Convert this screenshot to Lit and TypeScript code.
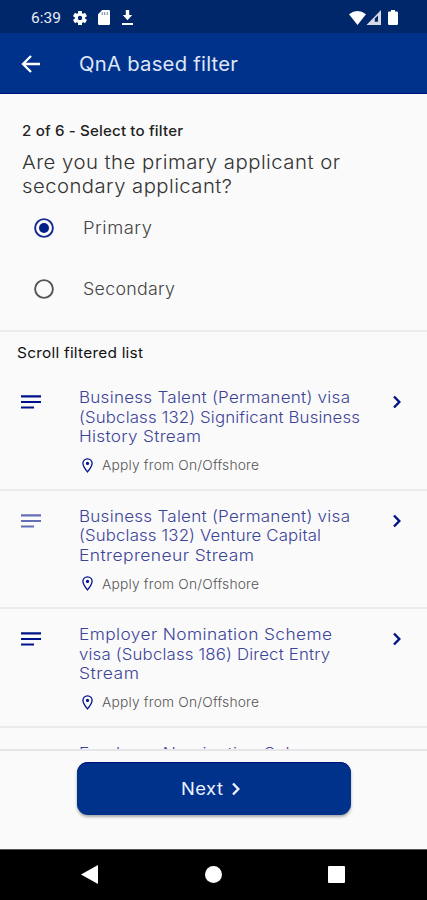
import { LitElement, html, css, svg } from "lit";
import { customElement, property } from "lit/decorators.js";

/** One line of text, widened (half by tracking, half by glyph width) to the given width. */
@customElement("fit-line")
class FitLine extends LitElement {
  static styles = css`
    :host { display: block; white-space: nowrap; }
    span { display: inline-block; transform-origin: left; }
  `;
  @property() text = "";
  @property({ type: Number }) width = 0;

  firstUpdated() {
    const span = this.renderRoot.querySelector("span")!;
    const natural = span.getBoundingClientRect().width;
    const tracking = ((this.width - natural) * 0.35) / (this.text.length - 1);
    const tracked = natural + tracking * (this.text.length - 1);
    span.style.letterSpacing = `${tracking}px`;
    span.style.transform = `scaleX(${this.width / tracked})`;
    this.style.width = `${this.width}px`;
  }
  render() {
    return html`<span>${this.text}</span>`;
  }
}

type Line = [string, number];
const line = ([text, width]: Line) => html`<fit-line .text=${text} .width=${width}></fit-line>`;

const chevron = html`<svg class="chevron" width="10" height="14" viewBox="0 0 10 14">
  <path d="M2 1.5 7.3 7 2 12.5" fill="none" stroke="currentColor" stroke-width="2.4" />
</svg>`;

@customElement("visa-row")
class VisaRow extends LitElement {
  static styles = css`
    :host { display: flex; height: 118.5px; box-sizing: border-box; border-bottom: 2px solid #ebebec; color: #00128a; flex: none; }
    .lead { width: 79px; padding: 23px 0 0 21px; box-sizing: border-box; flex: none; }
    .lead svg { display: block; }
    .lead.faded { opacity: .6; }
    .body { flex: 1; padding-top: 16px; }
    .title { font-size: 16.2px; line-height: 19.6px; font-weight: 300; color: #3c4499; }
    .place { display: flex; align-items: center; gap: 8.5px; margin-top: 8.5px; padding-left: 3px; height: 20px; }
    .where { font-size: 13.2px; font-weight: 300; color: #555; }
    .go { width: 35px; padding-top: 23px; }
    .chevron { display: block; }
  `;
  @property({ attribute: false }) lines: Line[] = [];
  @property({ type: Boolean }) faded = false;

  render() {
    return html`
      <div class="lead ${this.faded ? "faded" : ""}">
        <svg width="20" height="14" viewBox="0 0 20 14">
          <path d="M0 1.4H20M0 7H20M0 12.5H13" stroke="currentColor" stroke-width="2.1" />
        </svg>
      </div>
      <div class="body">
        <div class="title">${this.lines.map(line)}</div>
        <div class="place">
          <svg width="11" height="15" viewBox="0 0 11 15">
            <path d="M5.5 .8C2.8 .8 .9 2.8.9 5.3c0 3.2 4.6 8.6 4.6 8.6s4.6-5.4 4.6-8.6C10.1 2.8 8.2.8 5.5.8Z" fill="none" stroke="currentColor" stroke-width="1.3" />
            <circle cx="5.5" cy="5.4" r="1.6" fill="currentColor" />
          </svg>
          <div class="where">${line(["Apply from On/Offshore", 157])}</div>
        </div>
      </div>
      <div class="go">${chevron}</div>
    `;
  }
}

const gearTeeth = [0, 60, 120].map(
  (a) => svg`<rect x="5" y="0" width="4" height="14" rx=".6" transform="rotate(${a} 7 7)" />`
);

const visas: { lines: Line[]; faded?: boolean }[] = [
  { lines: [["Business Talent (Permanent) visa", 271], ["(Subclass 132) Significant Business", 281], ["History Stream", 122]] },
  { lines: [["Business Talent (Permanent) visa", 271], ["(Subclass 132) Venture Capital", 242], ["Entrepreneur Stream", 175]], faded: true },
  { lines: [["Employer Nomination Scheme", 253], ["visa (Subclass 186) Direct Entry", 251], ["Stream", 60]] },
  { lines: [["Employer Nomination Scheme", 253]] },
];

@customElement("app-root")
class AppRoot extends LitElement {
  static styles = css`
    :host { display: flex; flex-direction: column; width: 427px; height: 900px; overflow: hidden; background: #fafafa; font-family: Inter, "Noto Sans", sans-serif; }
    svg { display: block; }
    .status { height: 33px; flex: none; background: #002769; color: #fff; display: flex; align-items: center; padding: 2px 29px 0 31px; box-sizing: border-box; }
    .clock { font: 400 15.3px/20px Roboto, sans-serif; width: 42px; color: #e9edf7; }
    .notices { display: flex; align-items: center; gap: 11px; flex: 1; }
    .signals { display: flex; align-items: center; }
    .battery { margin-left: 6px; }
    .bar { height: 61px; flex: none; background: #00328c; border-bottom: 1px solid #00107c; box-sizing: border-box; display: flex; align-items: center; padding: 1px 0 0 21px; color: #fff; }
    .heading { margin-left: 38px; font-size: 19.4px; color: #dfe6f8; font-weight: 400; }
    .question { height: 238px; flex: none; box-sizing: border-box; padding: 27px 22px 0; border-bottom: 2px solid #ebebec; }
    .step { font-size: 14.5px; line-height: 20px; font-weight: 500; color: #222; }
    .ask { margin-top: 10px; font-size: 18.8px; line-height: 24px; font-weight: 300; color: #333; }
    .option { display: flex; align-items: center; gap: 29px; height: 61px; padding-left: 12px; font-size: 17px; font-weight: 300; color: #444; }
    .options { margin-top: -1.5px; }
    .caption { flex: none; padding: 11px 17px 0; height: 50px; box-sizing: border-box; font-size: 14.5px; line-height: 20px; font-weight: 400; color: #111; }
    .list { flex: 1; min-height: 0; overflow: hidden; display: flex; flex-direction: column; margin-top: -10px; }
    .footer { height: 100px; flex: none; box-sizing: border-box; border-top: 2px solid #e6e6e8; padding: 11px 76px 0 77px; }
    .next { height: 53px; box-sizing: border-box; padding-right: 6px; border-radius: 11px; background: #00328c; box-shadow: inset 0 1px #00107c, 0 2px 3px #0005; color: #eef2ff; display: flex; align-items: center; justify-content: center; gap: 8px; font-size: 17.2px; line-height: 22px; font-weight: 400; }
    .nav { height: 51px; flex: none; background: #000; display: flex; align-items: center; justify-content: space-between; padding: 0 82px 1px 81px; box-sizing: border-box; border-top: 1px solid #555; }
  `;

  render() {
    return html`
      <div class="status">
        <div class="clock">${line(["6:39", 30])}</div>
        <div class="notices">
          <svg width="14" height="14" viewBox="0 0 14 14" fill="#fff"><circle cx="7" cy="7" r="5.2" />${gearTeeth}<circle cx="7" cy="7" r="2.2" fill="#002769" /></svg>
          <svg width="12" height="15" viewBox="0 0 12 15"><path d="M4.2 0H10.8Q12 0 12 1.2V13.8Q12 15 10.8 15H1.2Q0 15 0 13.8V4.2Z" fill="#fff" /><path d="M4.2 2.2V5M6.7 2.2V5M9.2 2.2V5" stroke="#002769" stroke-width="1" opacity=".6" /></svg>
          <svg width="13" height="15" viewBox="0 0 13 15"><path d="M4.8 0H8.2V5H11.2L6.5 10.2 1.8 5H4.8ZM1 13H12V15H1Z" fill="#fff" /></svg>
        </div>
        <div class="signals">
          <svg width="17" height="14" viewBox="0 0 17 14"><path d="M0 3.2Q8.5-3 17 3.2L8.5 14Z" fill="#fff" /></svg>
          <svg width="16" height="15" viewBox="0 0 16 15"><path d="M.5 15 15 0V15Z" fill="#d5d9e6" /><path d="M8.8 11.8V8.6L12 5.4V11.8Z" fill="#002769" /></svg>
          <svg class="battery" width="10" height="15" viewBox="0 0 10 15"><path d="M3 0H7V1.4H8.8Q10 1.4 10 2.6V13.8Q10 15 8.8 15H1.2Q0 15 0 13.8V2.6Q0 1.4 1.2 1.4H3Z" fill="#fff" /></svg>
        </div>
      </div>
      <div class="bar">
        <svg width="20" height="18" viewBox="0 0 20 18"><path d="M19 9H2M10 1 2 9 10 17" fill="none" stroke="#fff" stroke-width="2.3" /></svg>
        <div class="heading">${line(["QnA based filter", 159])}</div>
      </div>
      <div class="question">
        <div class="step">${line(["2 of 6 - Select to filter", 161])}</div>
        <div class="ask">${line(["Are you the primary applicant or", 318])}${line(["secondary applicant?", 210])}</div>
        <div class="options">
          <div class="option">
            <svg width="20" height="20" viewBox="0 0 20 20"><circle cx="10" cy="10" r="8.9" fill="none" stroke="#142a92" stroke-width="1.9" /><circle cx="10" cy="10" r="5" fill="#00208a" /></svg>
            ${line(["Primary", 69])}
          </div>
          <div class="option">
            <svg width="20" height="20" viewBox="0 0 20 20"><circle cx="10" cy="10" r="8.9" fill="none" stroke="#555" stroke-width="1.9" /></svg>
            ${line(["Secondary", 92])}
          </div>
        </div>
      </div>
      <div class="caption">${line(["Scroll filtered list", 126])}</div>
      <div class="list">
        ${visas.map((v) => html`<visa-row .lines=${v.lines} .faded=${!!v.faded}></visa-row>`)}
      </div>
      <div class="footer">
        <div class="next">${line(["Next", 42])}${chevron}</div>
      </div>
      <div class="nav">
        <svg width="17" height="19" viewBox="0 0 17 19"><path d="M0 9.5 17 0V19Z" fill="#fff" /></svg>
        <svg width="17" height="17" viewBox="0 0 17 17"><circle cx="8.5" cy="8.5" r="8.5" fill="#fff" /></svg>
        <svg width="17" height="17" viewBox="0 0 17 17"><rect width="17" height="17" rx="1" fill="#fff" /></svg>
      </div>
    `;
  }
}
